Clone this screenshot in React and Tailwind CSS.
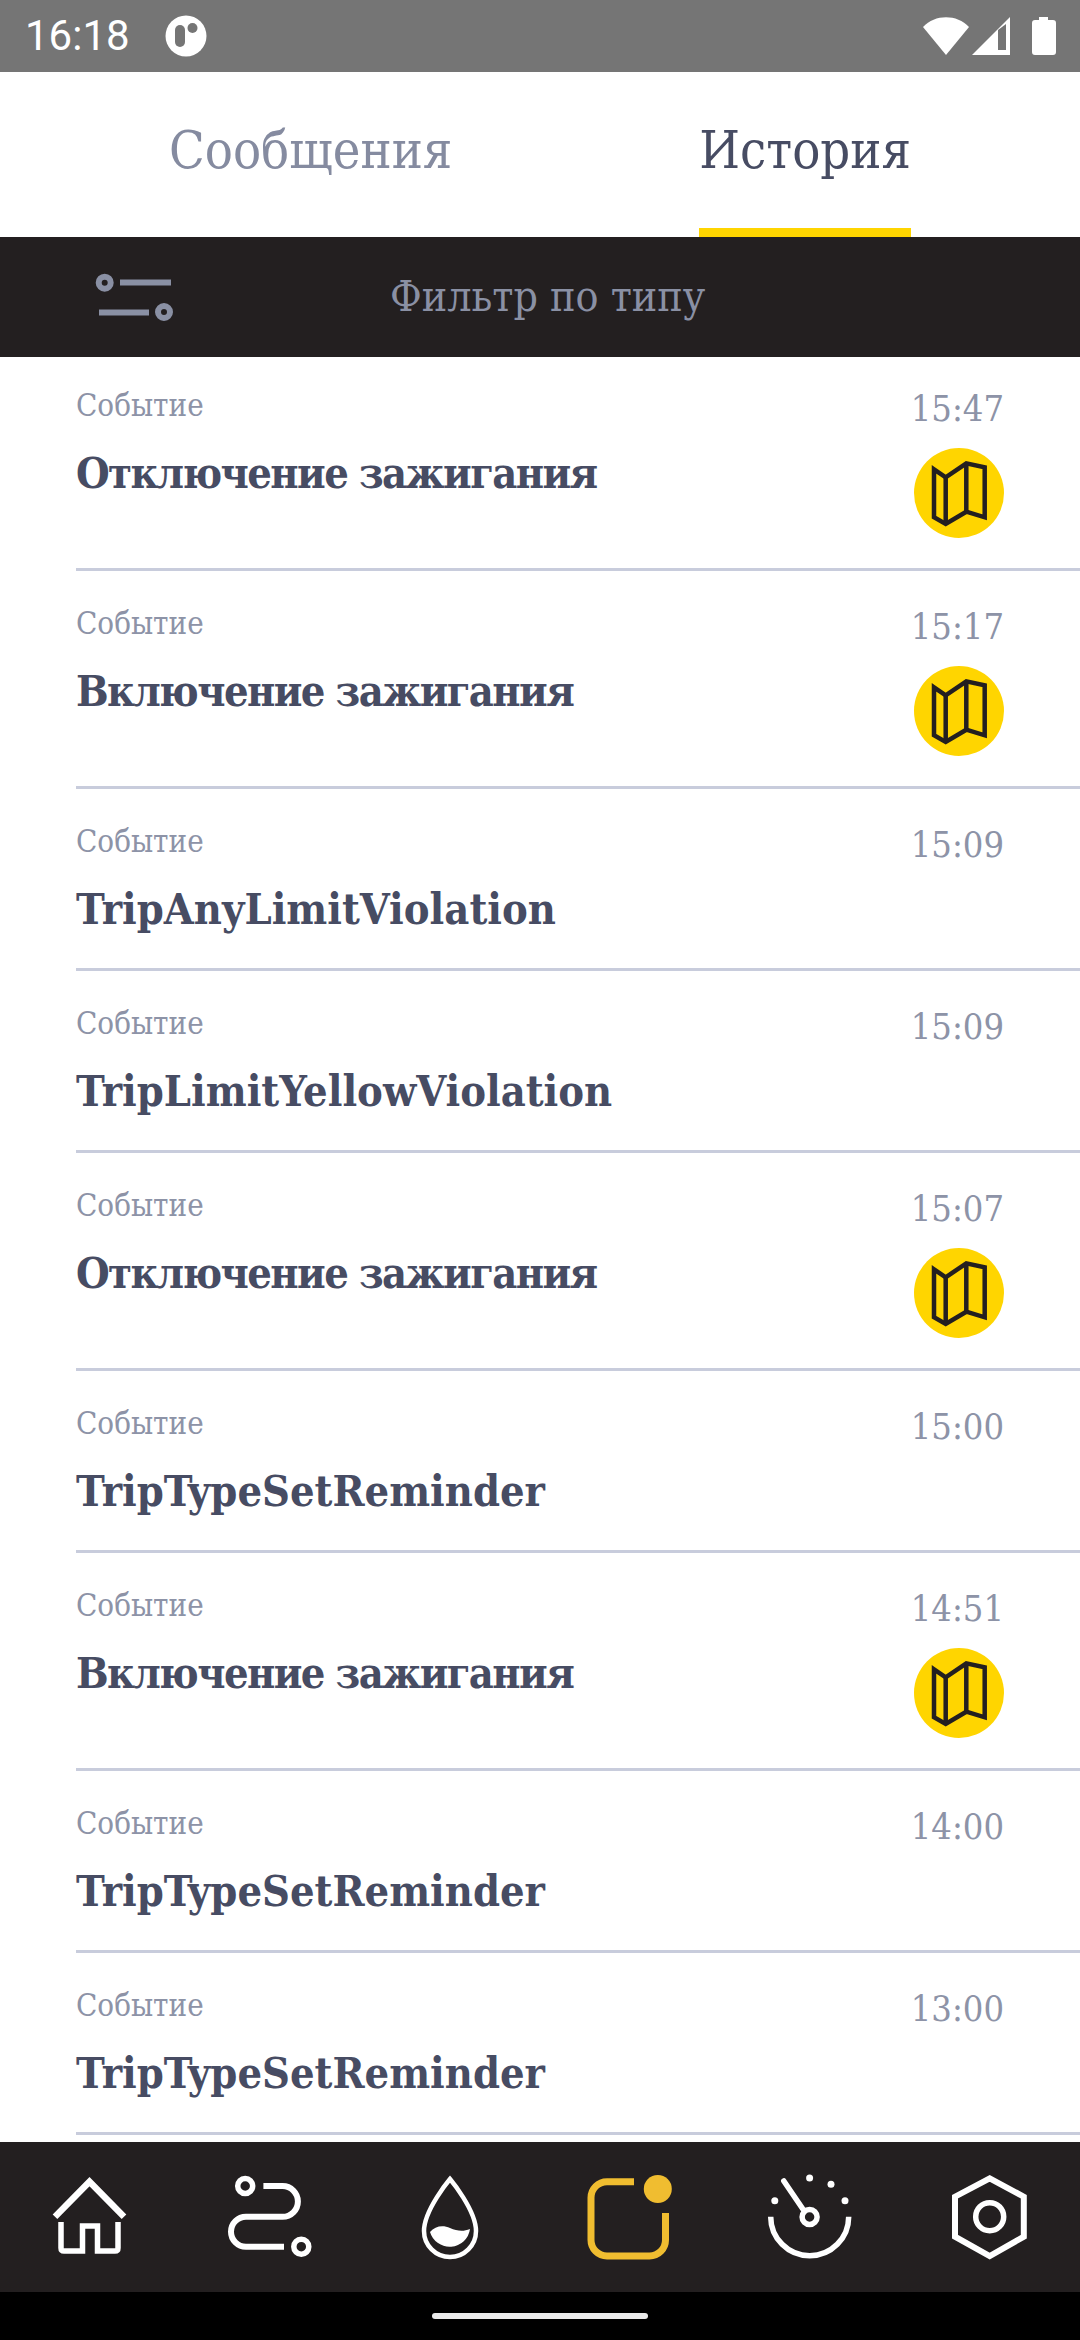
const slab = "font-['DejaVu_Serif_Condensed','DejaVu_Serif',serif]";

const rows = [
  { title: "Отключение зажигания", time: "15:47", map: true },
  { title: "Включение зажигания", time: "15:17", map: true },
  { title: "TripAnyLimitViolation", time: "15:09" },
  { title: "TripLimitYellowViolation", time: "15:09" },
  { title: "Отключение зажигания", time: "15:07", map: true },
  { title: "TripTypeSetReminder", time: "15:00" },
  { title: "Включение зажигания", time: "14:51", map: true },
  { title: "TripTypeSetReminder", time: "14:00" },
  { title: "TripTypeSetReminder", time: "13:00" },
];

const MapBadge = () => (
  <div className="mt-[21px] h-[90px] w-[90px] rounded-full bg-[#ffd500]">
    <svg viewBox="0 0 90 90" className="h-full w-full" fill="none" stroke="#231f20" strokeWidth="4.5">
      <path d="M20 21.3L31.7 29.3L52.3 15.3L70.7 19.3V69.3L52.3 63.7L31.7 76L20 69.3Z" />
      <path d="M31.7 29.3V76M52.3 15.3V63.7" />
    </svg>
  </div>
);

const Row = ({ title, time, map }) => (
  <div className="ml-[76px] flex justify-between border-b-[3px] border-[#c8ccdc] pt-[34px] pr-[76px] pb-[30px]">
    <div>
      <div className={`${slab} text-[31px] leading-[36px] text-[#8d93a7]`}>Событие</div>
      {/* cyrillic runs wider than the original face, latin narrower */}
      <div className={`${slab} mt-[24px] mb-[2px] text-[43px] leading-[53px] font-bold text-[#474c63] ${map ? "tracking-[-1.6px]" : ""}`}>{title}</div>
    </div>
    <div className="flex flex-col items-end">
      <div className={`${slab} mt-[4px] text-[36px] leading-[36px] text-[#8d93a7]`}>{time}</div>
      {map && <MapBadge />}
    </div>
  </div>
);

const StatusBar = () => (
  <div className="flex h-[72px] items-center bg-[#757575] pl-[25px] text-white">
    <span className="font-['Roboto',sans-serif] text-[42px] leading-none">16:18</span>
    <svg viewBox="0 0 42 42" className="ml-[35px] h-[42px] w-[42px]">
      <circle cx="21" cy="21" r="20.5" fill="#fff" />
      <rect x="10" y="10" width="10" height="22" rx="5" fill="#757575" />
      <circle cx="27.5" cy="13" r="5" fill="#757575" />
    </svg>
    <div className="ml-auto flex items-center pr-[24px]">
      <svg viewBox="0 0 46 38" className="h-[38px] w-[46px]" fill="#fff">
        <path d="M0 10C12 -3 34 -3 46 10L23 38Z" />
      </svg>
      <svg viewBox="0 0 38 38" className="ml-[3px] h-[38px] w-[38px]">
        <path fill="#fff" d="M0 38L38 0V38Z" />
        <path fill="#757575" d="M26 13L34 7V33H26Z" />
      </svg>
      <svg viewBox="0 0 24 38" className="ml-[22px] h-[38px] w-[24px]" fill="#fff">
        <path d="M7 0H16V3H21Q24 3 24 6V35Q24 38 21 38H3Q0 38 0 35V6Q0 3 3 3H7Z" />
      </svg>
    </div>
  </div>
);

const NavIcon = ({ children }) => (
  <div className="flex items-center justify-center">
    <svg viewBox="0 0 90 90" className="h-[90px] w-[90px]" fill="none" stroke="#fff" strokeWidth="5.5">
      {children}
    </svg>
  </div>
);

const BottomNav = () => (
  <div className="grid h-[150px] shrink-0 grid-cols-6 bg-[#231f20]">
    <NavIcon>
      <path d="M10 44.7L44.5 9.7L79 44.7" strokeWidth="6.5" />
      <path d="M16 50V76Q16 79 19 79H37.5V54H52.5V79H70Q73 79 73 76V50" strokeWidth="5.5" />
    </NavIcon>
    <NavIcon>
      <circle cx="20.2" cy="14" r="7.5" />
      <circle cx="76.3" cy="74.7" r="7.5" />
      <path d="M38.4 14H57.5a15.4 15.4 0 0 1 0 30.8H21a15 15 0 0 0 0 30H59" strokeWidth="6" />
    </NavIcon>
    <NavIcon>
      <path d="M45 7C45 7 19 38 19 59a26 26 0 0 0 52 0C71 38 45 7 45 7Z" strokeWidth="4.5" />
      <path fill="#fff" stroke="none" d="M25 60C30 54 38 53 45 56C52 59 58 60 65 57A20.5 20.5 0 0 1 25 60Z" />
    </NavIcon>
    <NavIcon>
      <path stroke="#f0bd30" strokeWidth="7" d="M49 9.7H22a16 16 0 0 0 -16 16V68a16 16 0 0 0 16 16H64.5a16 16 0 0 0 16 -16V41" />
      <circle cx="72.8" cy="17" r="14" fill="#f0bd30" stroke="none" />
    </NavIcon>
    <NavIcon>
      <path d="M5.7 44.7a39 39 0 0 0 78 0" />
      <circle cx="44.6" cy="45" r="7.5" />
      <path d="M18.8 9L38.5 38" strokeLinecap="round" />
      <g fill="#fff" stroke="none">
        <circle cx="9.8" cy="28.7" r="3.5" />
        <circle cx="44.6" cy="6" r="3.5" />
        <circle cx="66" cy="12.3" r="3.5" />
        <circle cx="80" cy="28.7" r="3.5" />
      </g>
    </NavIcon>
    <NavIcon>
      <path d="M44.7 6.3L78.8 24.7V64.7L44.7 84L10 64.7V24.7Z" strokeWidth="6" />
      <circle cx="44.7" cy="44.7" r="14" />
    </NavIcon>
  </div>
);

export default function App() {
  return (
    <div className="flex h-[2340px] w-[1080px] flex-col overflow-hidden bg-white">
      <StatusBar />

      <div className="flex h-[165px] shrink-0 pl-[169px]">
        <div className={`${slab} pt-[47px] text-[52px] leading-[62px] text-[#858ba0]`}>Сообщения</div>
        <div className={`${slab} ml-[247px] border-b-[9px] border-[#ffd500] pt-[47px] text-[52px] leading-[62px] text-[#474c63]`}>История</div>
      </div>

      <div className="flex h-[120px] shrink-0 items-center bg-[#231f20] pl-[92px]">
        <svg viewBox="0 0 86 50" className="h-[50px] w-[86px]" fill="none" stroke="#8a90a4">
          <circle cx="12.7" cy="10.7" r="6" strokeWidth="6" />
          <path d="M28 10.5H79M7 40.5H57" strokeWidth="6" />
          <circle cx="72" cy="40" r="6" strokeWidth="6" />
        </svg>
        <span className={`${slab} ml-[212px] text-[42.5px] leading-none text-[#8a90a4]`}>Фильтр по типу</span>
      </div>

      <div className="min-h-0 flex-1 overflow-hidden">
        <div className="-mt-[4px]">
          {rows.map((row, i) => (
            <Row key={i} {...row} />
          ))}
        </div>
      </div>

      <BottomNav />

      <div className="flex h-[48px] shrink-0 items-center justify-center bg-black">
        <div className="h-[6px] w-[216px] rounded-full bg-[#ebebeb]" />
      </div>
    </div>
  );
}
